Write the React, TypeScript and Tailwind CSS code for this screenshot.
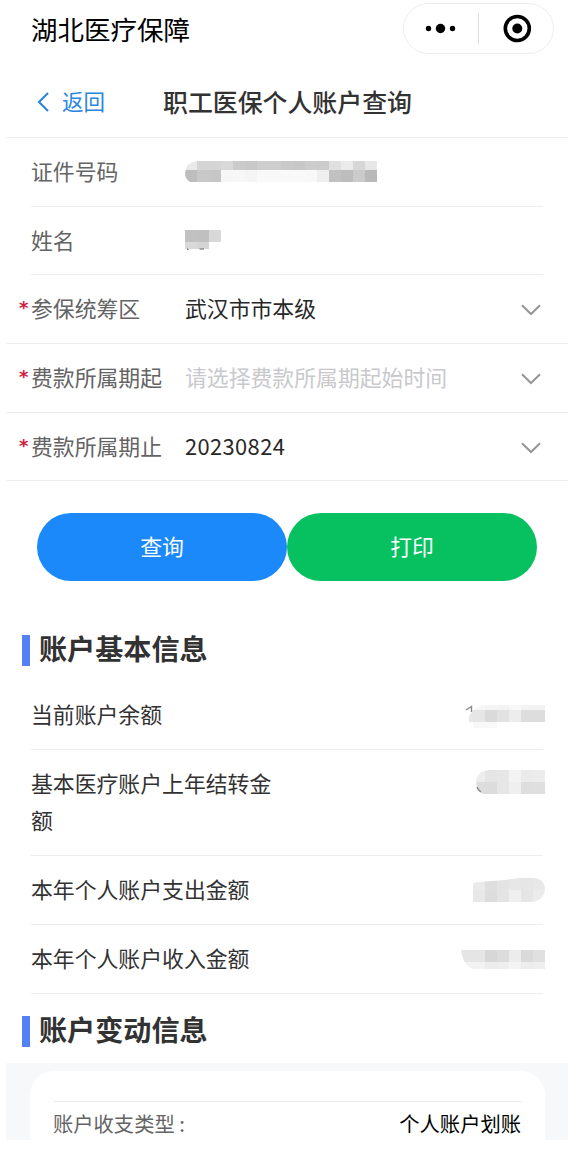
import type { ReactNode } from "react";

// ── Data ──────────────────────────────────────────────────────────────────────
const ID_MOSAIC = [
  { y: 0, h: 9, x: 0, cells: ["#e9e9e9", "#d5d5d5", "#d5d5d5", "#d9d9d9", "#cbcbcb", "#c8c8c8", "#cecece", "#cecece", "#c9c9c9", "#c7c7c7", "#cccccc", "#cbcbcb", "#e0e0e0", "#ebebeb", "#d7d7d7", "#e7e7e7"] },
  { y: 9, h: 12, x: 0, cells: ["#bdbdbd", "#c8c8c8", "#c6c6c6", "#f6f6f6", "#f7f7f7", "#f5f5f5", "#f9f9f9", "#f9f9f9", "#f9f9f9", "#f9f9f9", "#f8f8f8", "#efefef", "#c1c1c1", "#bdbdbd", "#cbcbcb", "#b9b9b9"] },
];

const NAME_MOSAIC = [
  { y: 0, h: 12, x: 0, cells: ["#c1c1c1", "#c0c0c0", "#d8d8d8"] },
  { y: 12, h: 7, x: 0, cells: ["#d9d9d9", "#d4d4d4"] },
];

const ACCOUNT_ROWS = [
  {
    label: "当前账户余额",
    clip: "M2 24 V11 Q8 0 20 0 H78 V17 H30 V24 Z",
    dy: 2,
    rows: [
      { y: 0, h: 5, x: -6, cells: ["#f6f6f6", "#f6f6f6", "#f4f4f4", "#f3f3f3", "#f7f7f7", "#f3f3f3", "#f3f3f3"] },
      { y: 5, h: 12, x: -6, cells: ["#e7e7e7", "#e6e6e6", "#dadada", "#e2e2e2", "#ededed", "#dddddd", "#dddddd"] },
      { y: 17, h: 6, x: 6, cells: ["#f8f8f8", "#f8f8f8"] },
    ],
    remnant: "M-1 5 L4.5 1.5 V7",
  },
  {
    label: "基本医疗账户上年结转金额",
    clip: "M9 10 Q12 0 22 0 H78 V24 H16 Q9 22 9 10Z",
    dy: -2,
    rows: [
      { y: 0, h: 12, x: -6, cells: ["#eeeeee", "#ededed", "#e5e5e5", "#e6e6e6", "#f3f3f3", "#ebebeb", "#ececec"] },
      { y: 12, h: 12, x: -6, cells: ["#dddddd", "#dddddd", "#dcdcdc", "#e6e6e6", "#efefef", "#dedede", "#dfdfdf"] },
    ],
    remnant: "M10 17 Q11 20 14 22",
  },
  {
    label: "本年个人账户支出金额",
    clip: "M6 24 V7 Q6 4 12 4 L38 2 L52 0 H67 Q78 1 78 12 Q76 24 62 24Z",
    dy: 0,
    rows: [
      { y: 0, h: 12, x: -6, cells: ["#ececec", "#eaeaea", "#dedede", "#e3e3e3", "#e7e7e7", "#e6e6e6", "#e8e8e8"] },
      { y: 12, h: 12, x: -6, cells: ["#e9e9e9", "#e8e8e8", "#dddddd", "#e4e4e4", "#efefef", "#e5e5e5", "#ebebeb"] },
    ],
  },
  {
    label: "本年个人账户收入金额",
    clip: "M-6 0 H78 V19 H7 Q-3 18 -6 0Z",
    dy: 3,
    rows: [
      { y: 0, h: 12, x: -6, cells: ["#e5e5e5", "#e5e5e5", "#d7d7d7", "#dcdcdc", "#ececec", "#dadada", "#e0e0e0"] },
      { y: 12, h: 7, x: -6, cells: ["#f3f3f3", "#f2f2f2", "#ededed", "#eeeeee", "#f4f4f4", "#ededed", "#eeeeee"] },
    ],
  },
];

// ── Pieces ────────────────────────────────────────────────────────────────────

type MosaicRow = { x: number; y: number; h: number; cells: string[] };

function Cells({ rows }: { rows: MosaicRow[] }) {
  return (
    <>
      {rows.map((row) =>
        row.cells.map((fill, i) => (
          <rect key={`${row.y}-${i}`} x={row.x + i * 12} y={row.y} width={12} height={row.h} fill={fill} shapeRendering="crispEdges" />
        ))
      )}
    </>
  );
}

function Chevron() {
  return (
    <svg className="mr-[27px] mt-[5px] h-[12px] w-[20px] shrink-0" viewBox="0 0 20 12" fill="none">
      <path d="M1 1.2 L10 10 L19 1.2" stroke="#969696" strokeWidth="2" />
    </svg>
  );
}

function Field({ label, required, children, inset }: { label: string; required?: boolean; children: ReactNode; inset?: boolean }) {
  return (
    <div className={inset ? "ml-[25px] mr-[25px] border-b border-[#ededed]" : "border-b border-[#ededed] pl-[25px]"}>
      <div className="relative flex h-[67.7px] items-center pb-[3px]">
        {required && <span className="absolute -left-[12px] top-[14px] font-['DejaVu_Sans'] text-[18px] font-bold leading-[37px] text-[#d0213c]">*</span>}
        <span className="w-[154px] shrink-0 text-[#646464]">{label}</span>
        <div className="flex flex-1 items-center justify-between">{children}</div>
      </div>
    </div>
  );
}

function SectionTitle({ children }: { children: ReactNode }) {
  return (
    <div className="flex items-center pl-[16px]">
      <span className="mt-[3px] h-[31px] w-[8px] bg-[#5480f5]" />
      <h2 className="-mt-[2px] ml-[9px] text-[28.1px] font-bold leading-[40px] text-[#323233]">{children}</h2>
    </div>
  );
}

// ── Page ──────────────────────────────────────────────────────────────────────

export default function App() {
  return (
    <div className="h-[1159px] w-[579px] overflow-hidden bg-white font-['Noto_Sans_CJK_SC',sans-serif] text-[21.85px] leading-[37px]">
      <div className="ml-[6px] flex h-[1140px] w-[562px] flex-col overflow-hidden">

        {/* Mini program bar */}
        <header className="flex h-[66px] shrink-0 justify-between pl-[25px] pr-[14px]">
          <h1 className="mt-[9px] text-[26.5px] leading-[40px] text-black">湖北医疗保障</h1>
          <div className="mt-[3px] flex h-[51px] w-[151px] items-center rounded-full border-[1.5px] border-[#ededed]">
            <svg className="h-full w-full" viewBox="0 0 149 49">
              <circle cx="24.5" cy="24.5" r="2.7" />
              <circle cx="36.5" cy="24.5" r="4.7" />
              <circle cx="48.5" cy="24.5" r="2.7" />
              <path d="M74.5 9 V40" stroke="#dedede" />
              <circle cx="113.3" cy="24.5" r="12" fill="none" stroke="#000" strokeWidth="3.6" />
              <circle cx="113.3" cy="24.5" r="5" />
            </svg>
          </div>
        </header>

        {/* Page nav */}
        <nav className="flex h-[72px] shrink-0 items-center border-b border-[#ededed] pl-[31px]">
          <svg className="h-[20px] w-[13px]" viewBox="0 0 13 20" fill="none">
            <path d="M11 1 L2 10 L11 19" stroke="#2b86e0" strokeWidth="2.1" />
          </svg>
          <span className="-mt-[2px] ml-[12px] w-[101px] text-[21.5px] text-[#2b86e0]">返回</span>
          <span className="-mt-px text-[24.9px] font-medium text-[#323233]">职工医保个人账户查询</span>
        </nav>

        {/* Query form */}
        <Field label="证件号码" inset>
          <svg className="mt-[3px] h-[21px] w-[193px]" viewBox="0 0 193 21">
            <clipPath id="id"><path d="M0 12 Q1 1 12 0 H192 V21 H5 Q0 18 0 12Z" /></clipPath>
            <g clipPath="url(#id)"><Cells rows={ID_MOSAIC} /></g>
          </svg>
        </Field>
        <Field label="姓名" inset>
          <svg className="mt-px h-[20px] w-[36px]" viewBox="0 0 36 20">
            <Cells rows={NAME_MOSAIC} />
            <path d="M2 19.3 H3.5 M14.5 19 H19" stroke="#666" strokeWidth="1.2" />
          </svg>
        </Field>
        <Field label="参保统筹区" required>
          <span className="text-[#282828]">武汉市市本级</span>
          <Chevron />
        </Field>
        <Field label="费款所属期起" required>
          <span className="text-[#c8c9cc]">请选择费款所属期起始时间</span>
          <Chevron />
        </Field>
        <Field label="费款所属期止" required>
          <span className="tracking-[0.4px] text-[#282828]">20230824</span>
          <Chevron />
        </Field>

        <div className="mt-[32px] flex shrink-0 px-[31px]">
          <button className="h-[68px] w-[250px] rounded-full bg-[#1b89fa] pb-[4px] text-white">查询</button>
          <button className="h-[68px] w-[250px] rounded-full bg-[#07c160] pb-[4px] text-white">打印</button>
        </div>

        {/* Account summary */}
        <section className="mt-[49px] shrink-0">
          <SectionTitle>账户基本信息</SectionTitle>
          <ul className="ml-[25px] mt-[13px] w-[512px]">
            {ACCOUNT_ROWS.map(({ label, rows, clip, remnant, dy }, i) => (
              <li key={label} className="flex justify-between border-b border-[#ededed] pb-[16.8px] pt-[14px]">
                <span className="w-[245px] text-[#323233]">{label}</span>
                <svg className="-mr-[2px] mt-[8px] h-[26px] w-[85px] overflow-visible" viewBox={`-7 ${-dy} 85 26`}>
                  <clipPath id={`row${i}`}><path d={clip} /></clipPath>
                  <g clipPath={`url(#row${i})`}><Cells rows={rows} /></g>
                  {remnant && <path d={remnant} fill="none" stroke="#8a8a8a" strokeWidth="1.4" />}
                </svg>
              </li>
            ))}
          </ul>
        </section>

        {/* Account changes */}
        <section className="mt-[17px] shrink-0">
          <SectionTitle>账户变动信息</SectionTitle>
          <div className="mt-[14px] bg-[#f6f8fa] pl-[24px] pr-[23px] pt-[8px]">
            <div className="rounded-t-[24px] bg-white px-[23px] pt-[30px]">
              <div className="flex justify-between border-t border-[#ebebeb] pt-[3px] text-[20.3px]">
                <span className="text-[#646464]">账户收支类型 :</span>
                <span className="mr-px text-black">个人账户划账</span>
              </div>
            </div>
          </div>
        </section>
      </div>
    </div>
  );
}
